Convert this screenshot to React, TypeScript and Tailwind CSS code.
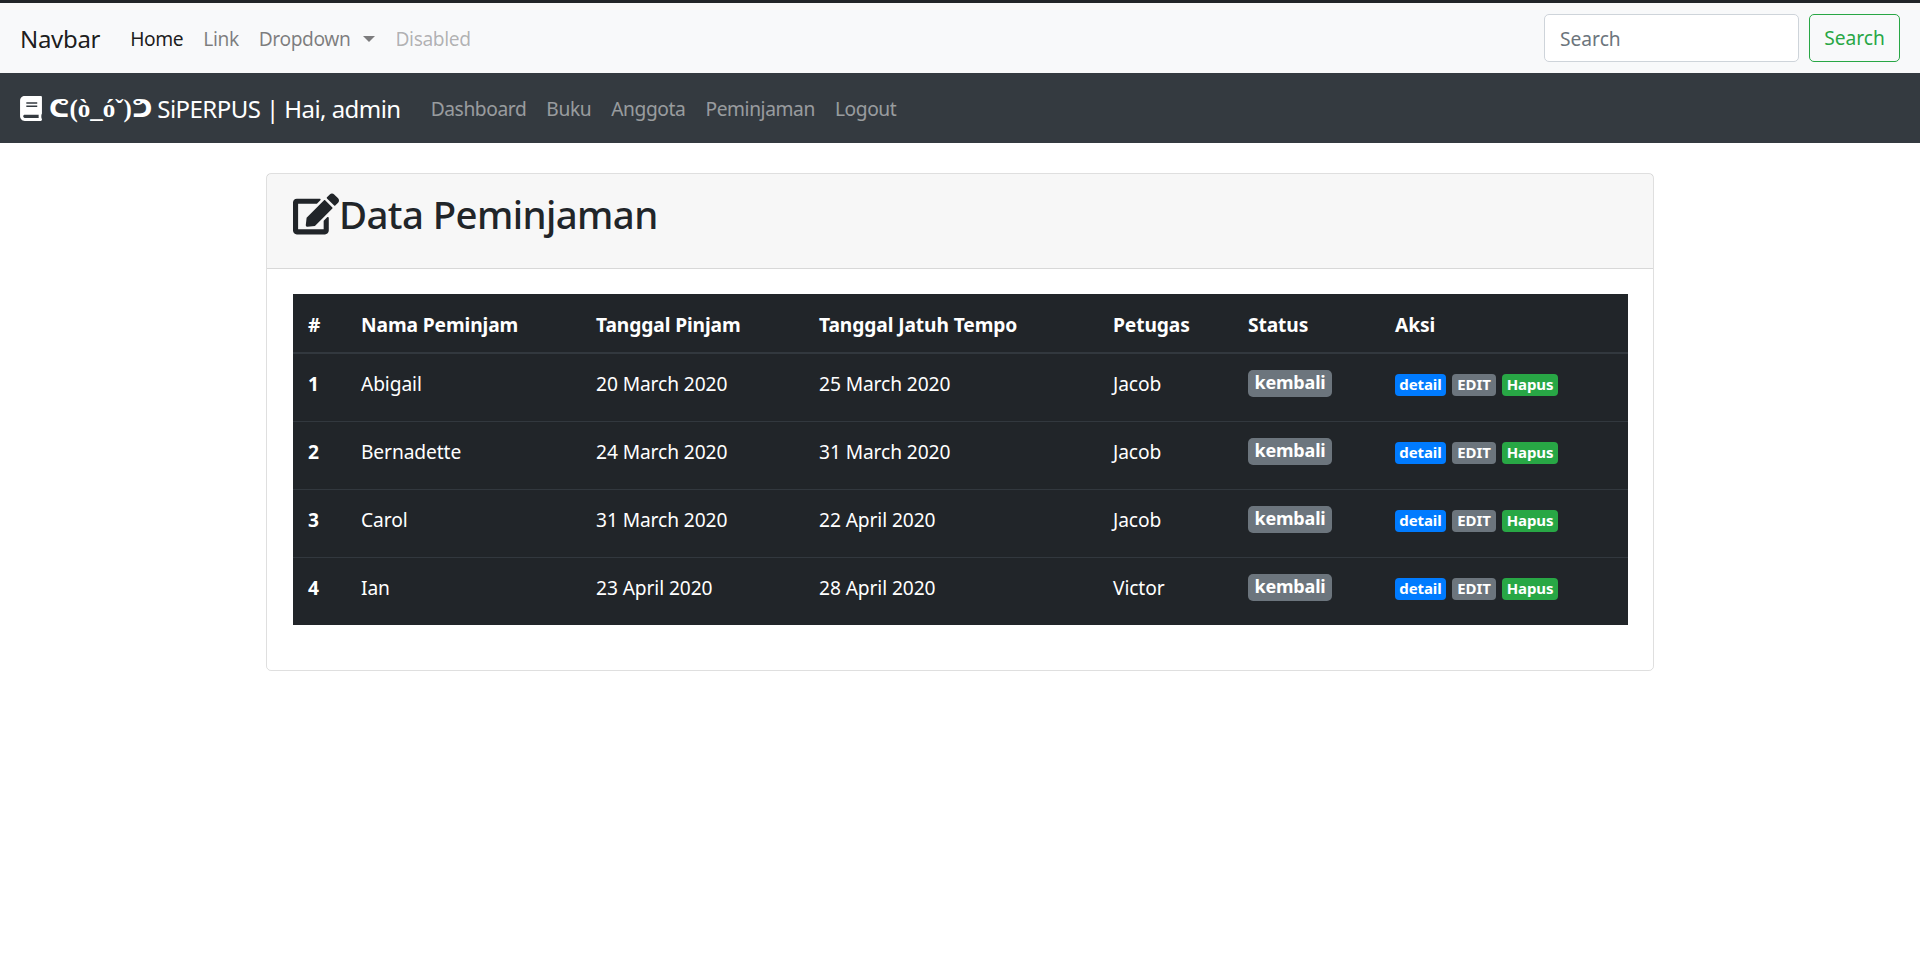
import { FaBook, FaEdit } from 'react-icons/fa'

const rows = [
    { no: 1, nama: 'Abigail', pinjam: '20 March 2020', tempo: '25 March 2020', petugas: 'Jacob' },
    { no: 2, nama: 'Bernadette', pinjam: '24 March 2020', tempo: '31 March 2020', petugas: 'Jacob' },
    { no: 3, nama: 'Carol', pinjam: '31 March 2020', tempo: '22 April 2020', petugas: 'Jacob' },
    { no: 4, nama: 'Ian', pinjam: '23 April 2020', tempo: '28 April 2020', petugas: 'Victor' },
]

const Badge = ({ color, children }: { color: string; children: string }) => (
    <a className={`inline-block h-[22px] rounded-[4px] text-center text-[15px] font-bold leading-[21px] text-white ${color}`}>
        {children}
    </a>
)

const App = () => {
    return (
        <div className="min-h-[956px] bg-white text-[19.2px] text-[#212529] font-['Noto_Sans','Open_Sans',sans-serif]">
            <div className="h-[3px] bg-[#212529]" />

            <nav className="flex h-[70px] items-center justify-between bg-[#f8f9fa] px-[20px]">
                <div className="flex items-center pt-[1px]">
                    <a className="mr-[30px] text-[24px] tracking-[-0.3px] text-black/90">Navbar</a>
                    <ul className="mt-[2px] flex items-center gap-[20px] tracking-[-0.4px] text-black/50">
                        <li className="text-black/90">Home</li>
                        <li>Link</li>
                        <li className="flex items-center gap-[13px]">
                            Dropdown
                            <span className="h-0 w-0 border-x-[6px] border-t-[6px] border-x-transparent border-t-black/50" />
                        </li>
                        <li className="text-black/30">Disabled</li>
                    </ul>
                </div>
                <form className="flex items-center gap-[10px]">
                    <input
                        placeholder="Search"
                        className="h-[48px] w-[255px] rounded-[5px] border border-[#ced4da] bg-white px-[15px] placeholder-[#6c757d]"
                    />
                    <button type="button" className="h-[48px] w-[91px] rounded-[5px] border border-[#28a745] text-[#28a745]">
                        Search
                    </button>
                </form>
            </nav>

            <nav className="flex h-[70px] items-center bg-[#343a40] pl-[20px] pt-[1px]">
                <a className="mr-[30px] flex items-center text-[24px] text-white">
                    <FaBook className="mr-[7px] h-[25px] w-[22px]" />
                    <span className="font-['DejaVu_Sans'] text-[25px] font-bold">ᕦ</span>
                    <span className="font-['Liberation_Serif'] text-[25px] font-bold">(ò_óˇ)</span>
                    <span className="font-['DejaVu_Sans'] text-[25px] font-bold">ᕤ</span>
                    <span className="ml-[5px] tracking-[-0.55px]">SiPERPUS | Hai, admin</span>
                </a>
                <ul className="mt-[2px] flex items-center gap-[20px] tracking-[-0.4px] text-white/50">
                    <li>Dashboard</li>
                    <li>Buku</li>
                    <li>Anggota</li>
                    <li>Peminjaman</li>
                    <li>Logout</li>
                </ul>
            </nav>

            <main className="mx-auto mt-[30px] w-[1388px]">
                <div className="rounded-[5px] border border-black/[.125]">
                    <div className="flex h-[95px] items-center border-b border-black/[.125] bg-black/[.03] pl-[26px]">
                        <FaEdit className="mb-[14px] h-[44px] w-[46px] shrink-0" />
                        <h1 className="mb-[13px] text-[38.4px] font-medium leading-none tracking-[-0.6px]">Data Peminjaman</h1>
                    </div>
                    <div className="pb-[45px] pl-[26px] pr-[25px] pt-[25px]">
                        <table className="w-full table-fixed border-collapse bg-[#212529] tracking-[-0.1px] text-white">
                            <thead>
                                <tr className="h-[59px] border-b-2 border-[#32383e] text-left">
                                    <th className="w-[68px] pl-[15px] pt-[4px] font-bold">#</th>
                                    <th className="w-[235px] pt-[4px] font-bold">Nama Peminjam</th>
                                    <th className="w-[223px] pt-[4px] font-bold">Tanggal Pinjam</th>
                                    <th className="w-[294px] pt-[4px] font-bold">Tanggal Jatuh Tempo</th>
                                    <th className="w-[135px] pt-[4px] font-bold">Petugas</th>
                                    <th className="w-[147px] pt-[4px] font-bold">Status</th>
                                    <th className="pt-[4px] font-bold">Aksi</th>
                                </tr>
                            </thead>
                            <tbody>
                                {rows.map((r) => (
                                    <tr key={r.no} className="h-[68px] border-b border-[#32383e] last:border-b-0">
                                        <th className="pb-[5px] pl-[15px] text-left font-bold">{r.no}</th>
                                        <td className="pb-[5px]">{r.nama}</td>
                                        <td className="pb-[5px]">{r.pinjam}</td>
                                        <td className="pb-[5px]">{r.tempo}</td>
                                        <td className="pb-[5px]">{r.petugas}</td>
                                        <td className="pb-[10px]">
                                            <span className="inline-block h-[27px] w-[84px] rounded-[5px] bg-[#6c757d] text-center text-[18px] font-bold leading-[24px] tracking-[-0.2px] text-white">
                                                kembali
                                            </span>
                                        </td>
                                        <td className="pb-[4px]">
                                            <div className="flex gap-[6px]">
                                                <Badge color="w-[51px] bg-[#007bff]">detail</Badge>
                                                <Badge color="w-[44px] bg-[#6c757d]">EDIT</Badge>
                                                <Badge color="w-[56px] bg-[#28a745]">Hapus</Badge>
                                            </div>
                                        </td>
                                    </tr>
                                ))}
                            </tbody>
                        </table>
                    </div>
                </div>
            </main>
        </div>
    )
}

export default App
